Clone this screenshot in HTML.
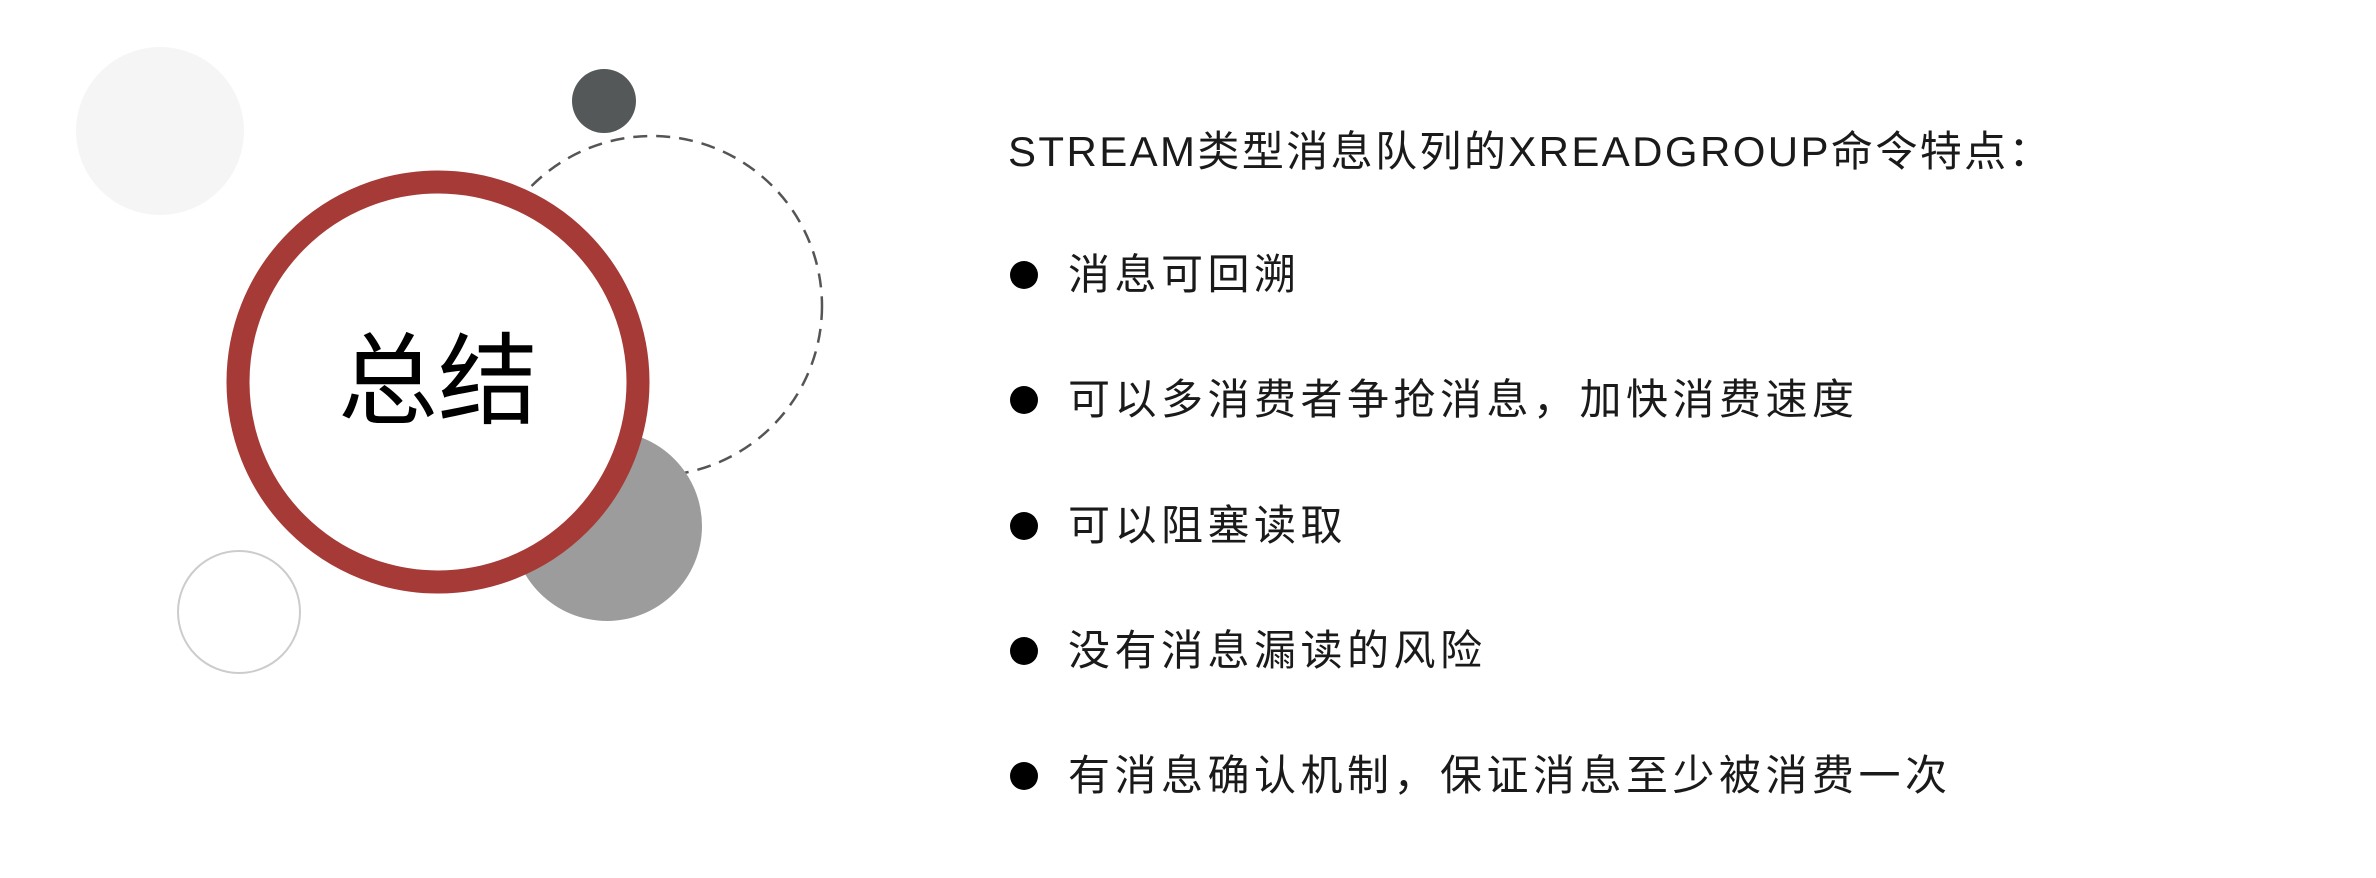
<!DOCTYPE html>
<html><head><meta charset="utf-8"><style>
html,body{margin:0;padding:0;background:#fff;}
body{width:2376px;height:878px;position:relative;overflow:hidden;font-family:"Liberation Sans","Noto Sans CJK SC",sans-serif;color:#1a1a1a;}
.t{position:absolute;font-size:42px;letter-spacing:4.5px;white-space:nowrap;line-height:50px;}
.dot{position:absolute;width:28px;height:28px;border-radius:50%;background:#000;left:1010px;}
</style></head><body>
<svg width="2376" height="878" style="position:absolute;left:0;top:0">
<circle cx="160" cy="131" r="84" fill="#f5f5f5"/>
<circle cx="604" cy="101" r="32" fill="#555858"/>
<circle cx="652" cy="306" r="170" fill="none" stroke="#555" stroke-width="2.5" stroke-dasharray="14 9"/>
<circle cx="607" cy="526" r="95" fill="#9c9c9c"/>
<circle cx="239" cy="612" r="61" fill="none" stroke="#ccc" stroke-width="2"/>
<circle cx="438" cy="382" r="200" fill="#fff" stroke="#a63a36" stroke-width="23"/>
<text x="438" y="416" text-anchor="middle" font-size="100" font-family="Liberation Sans, Noto Sans CJK SC, sans-serif" fill="#000">总结</text>
</svg>
<div class="t" style="left:1008px;top:127px;letter-spacing:2.4px;">STREAM类型消息队列的XREADGROUP命令特点：</div>
<div class="dot" style="top:261px"></div><div class="t" style="left:1068px;top:250px;">消息可回溯</div>
<div class="dot" style="top:386px"></div><div class="t" style="left:1068px;top:375px;">可以多消费者争抢消息，加快消费速度</div>
<div class="dot" style="top:512px"></div><div class="t" style="left:1068px;top:501px;">可以阻塞读取</div>
<div class="dot" style="top:637px"></div><div class="t" style="left:1068px;top:626px;">没有消息漏读的风险</div>
<div class="dot" style="top:762px"></div><div class="t" style="left:1068px;top:751px;">有消息确认机制，保证消息至少被消费一次</div>
</body></html>
